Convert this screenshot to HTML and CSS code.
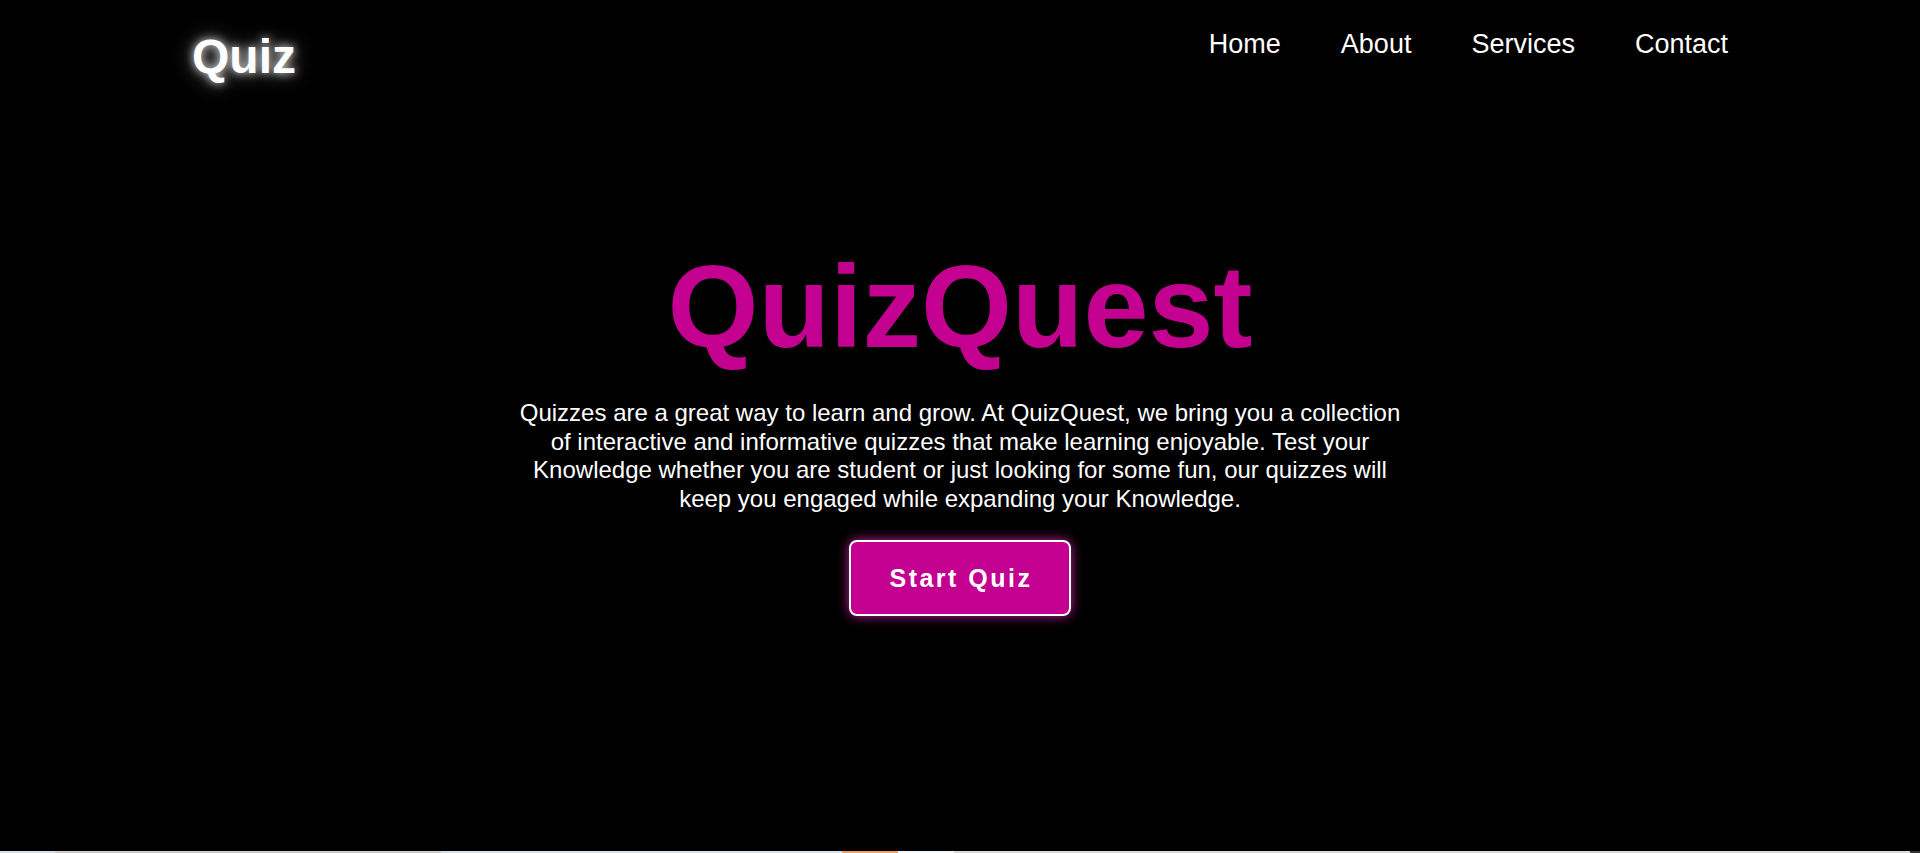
FILE: index.html
```html
<!DOCTYPE html>
<html lang="en">
<head>
<meta charset="utf-8">
<title>QuizQuest</title>
<link rel="stylesheet" href="styles.css">
</head>
<body>
<div class="page">
  <header class="header">
    <div class="logo">Quiz</div>
    <nav class="nav">
      <a href="#">Home</a>
      <a href="#">About</a>
      <a href="#">Services</a>
      <a href="#">Contact</a>
    </nav>
  </header>
  <main class="hero">
    <h1 class="title">QuizQuest</h1>
    <p class="intro">Quizzes are a great way to learn and grow. At QuizQuest, we bring you a collection of interactive and informative quizzes that make learning enjoyable. Test your Knowledge whether you are student or just looking for some fun, our quizzes will keep you engaged while expanding your Knowledge.</p>
    <button class="start">Start Quiz</button>
  </main>
</div>
<div class="peek">
  <span class="seg s1"></span>
  <span class="seg s2"></span>
  <span class="seg s3"></span>
  <span class="seg s4"></span>
  <span class="seg s5"></span>
  <span class="seg s6"></span>
  <span class="seg s7"></span>
</div>
</body>
</html>
```

FILE: styles.css
```css
* { box-sizing: border-box; }

html, body {
  margin: 0;
  padding: 0;
  background: #000;
  font-family: "Liberation Sans", Arial, sans-serif;
  color: #fff;
  overflow: hidden;
}

.page {
  display: grid;
  height: 851px;
}

.header,
.hero {
  grid-area: 1 / 1;
}

.header {
  display: flex;
  justify-content: space-between;
  align-items: flex-start;
  padding: 29px 192px 0;
  z-index: 1;
  align-self: start;
}

.logo {
  font-size: 48px;
  font-weight: 700;
  line-height: normal;
  color: #fff;
  text-shadow: 0 0 10px rgba(255,255,255,0.9), 0 0 22px rgba(255,255,255,0.45);
}

.nav {
  display: flex;
  gap: 60px;
}

.nav a {
  font-size: 27px;
  line-height: normal;
  color: #fff;
  text-decoration: none;
}

.hero {
  display: flex;
  flex-direction: column;
  align-items: center;
  justify-content: center;
  text-align: center;
  padding-top: 4px;
}

.title {
  margin: 0;
  font-size: 117px;
  font-weight: 700;
  line-height: normal;
  color: #c3008f;
}

.intro {
  margin: 25px 0 27px;
  max-width: 895px;
  font-size: 24px;
  line-height: 28.5px;
}

.start {
  font-family: "Liberation Sans", Arial, sans-serif;
  font-size: 25px;
  font-weight: 700;
  letter-spacing: 2.5px;
  line-height: normal;
  color: #fff;
  background: #c3008f;
  border: 2.5px solid #fff;
  border-radius: 8px;
  padding: 21.5px 36px 21.5px 38px;
  box-shadow: 0 0 12px rgba(255, 40, 200, 0.75);
  cursor: pointer;
}

.peek {
  display: flex;
  height: 2px;
}

.seg { display: block; height: 100%; }
.s1 { width: 55px; background: #d3dfe4; }
.s2 { width: 386px; background: #c9c9c9; }
.s3 { width: 401px; background: #d7e0e5; }
.s4 { width: 56px; background: #f0a060; }
.s5 { width: 56px; background: #f4f6f8; }
.s6 { width: 956px; background: #d8d8d8; }
.s7 { flex: 1; background: #333; }
```
